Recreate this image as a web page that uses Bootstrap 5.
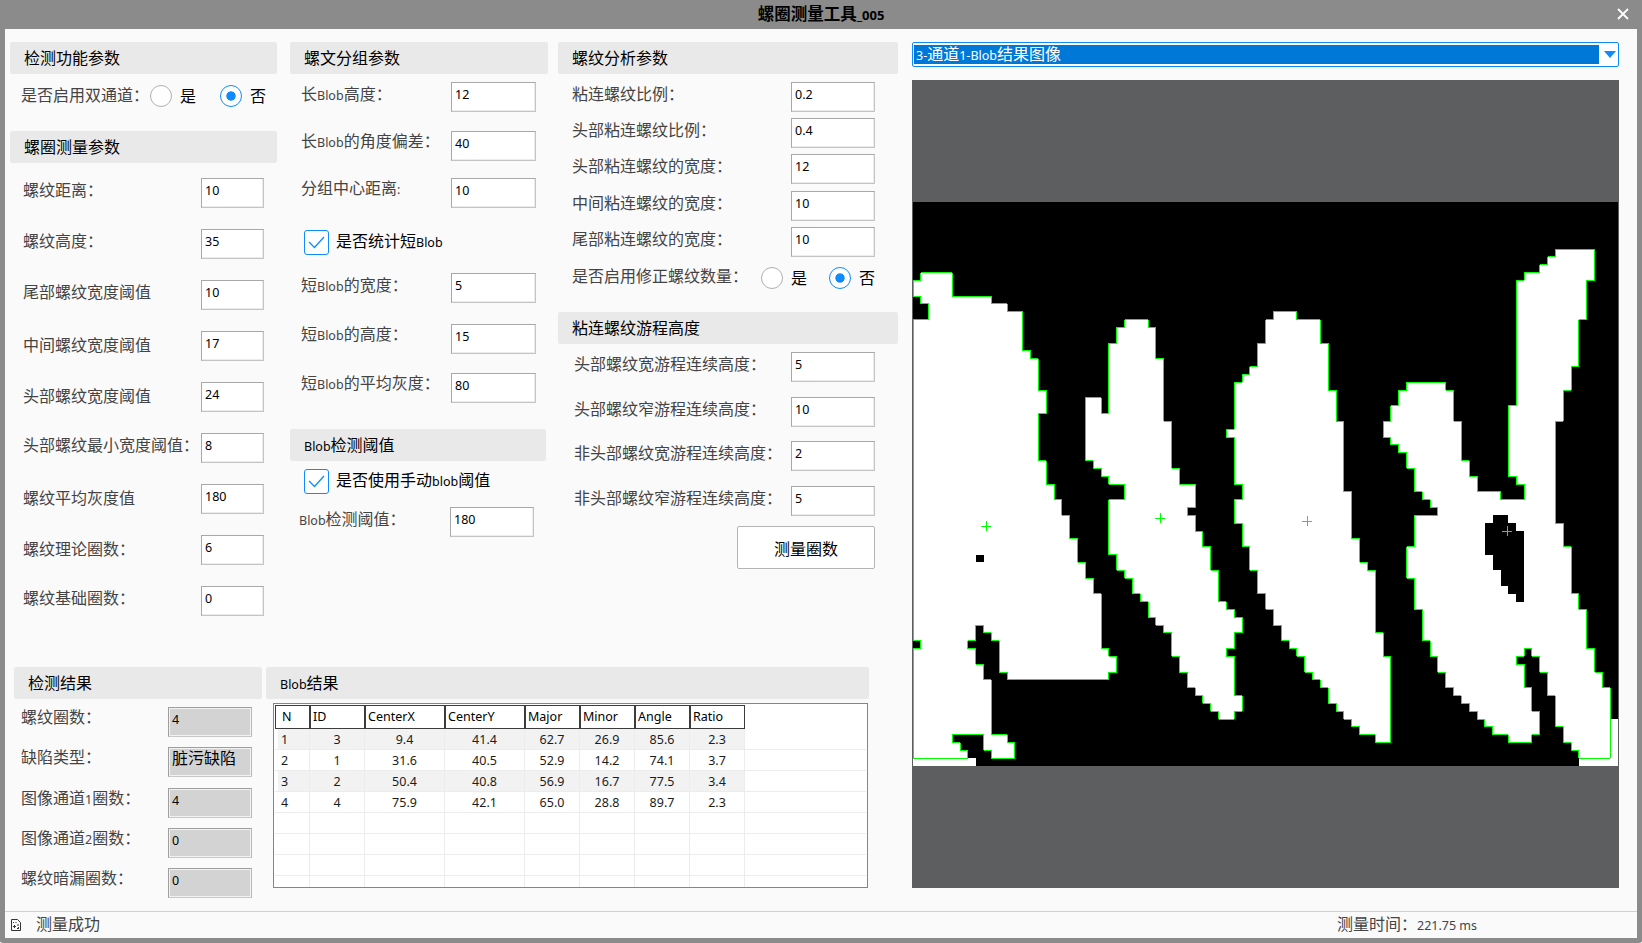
<!DOCTYPE html>
<html lang="zh-CN">
<head>
<meta charset="utf-8">
<meta name="viewport" content="width=device-width, initial-scale=1">
<title>螺圈测量工具_005</title>
<link href="https://cdn.jsdelivr.net/npm/bootstrap@5.3.0/dist/css/bootstrap.min.css" rel="stylesheet">
<style>
  :root { --edge: #8b8b8b; --accent: #0f8bff; --ui: "Noto Sans CJK SC", sans-serif; --latin: "Noto Sans", "Noto Sans CJK SC", sans-serif; }
  body { font-family: var(--ui); font-size: 16px; line-height: 25px; color: #444; background: #fff; overflow: hidden; }
  .tool-window { width: 1642px; height: 943px; background: #fafafa; border: 5px solid var(--edge); border-top: 0; border-radius: 3px; }
  .title-bar { height: 29px; margin: 0 -5px; background: var(--edge); color: #000; font-weight: 700; font-size: 16.5px; line-height: 26px; }
  .title-bar .lat { font-size: 13px; }
  .close-x { right: 13px; top: 8px; }
  .lat { font-family: var(--latin); font-size: 12.5px; line-height: 1; }
  .work-area { height: 883px; padding: 13px 0 0 5px; border-bottom: 1px solid #d0d0d0; }
  .param-zone { height: 625px; }
  .section-bar { height: 32px; padding-left: 14px; line-height: 30px; background: #e9e9e9; border-radius: 2px; color: #000; white-space: nowrap; }
  .pane-a { width: 267px; margin-right: 13px; }
  .pane-b { width: 258px; margin-right: 10px; }
  .pane-c { width: 340px; margin-right: 14px; }
  .bar-threshold { width: 256px; }
  .bar-result { width: 248px; }
  .bar-blob { width: 603px; }
  .bar-run { margin-top: 23px; }

  .fields { display: grid; align-items: start; white-space: nowrap; }
  .fields > label { line-height: 25px; margin-top: -1px; }
  .fields > .drop { margin-top: 1px; }
  .fields > .lift { margin-top: -3px; }
  .fields-a { grid-template-columns: 178px 63px; grid-auto-rows: 51px; padding-left: 13px; margin-top: 15px; }
  .fields-b { grid-template-columns: 150px 85px; padding-left: 11px; }
  .fields-c { grid-template-columns: 219px 84px; padding-left: 14px; }
  .rows-long { grid-template-rows: 49px 47px 52px; margin-top: 8px; }
  .rows-short { grid-template-rows: 51px 49px 56px; margin-top: 18px; }
  .rows-ratio { grid-template-rows: 36px 36px 37px 36px 36px; margin-top: 8px; }
  .rows-run { grid-template-rows: 45px 44px 45px 40px; margin-top: 8px; grid-template-columns: 217px 84px; padding-left: 16px; }
  .rows-manual { grid-template-columns: 151px 84px; padding-left: 9px; margin-top: 13px; }
  .rows-result { grid-template-columns: 147px 84px; grid-template-rows: 40px 41px 40px 40px 30px; margin-top: 8px; padding-left: 7px; }

  .box { height: 30px; padding: 0 0 0 3px; border-radius: 0; border: 1px solid #a8a8a8; border-right-color: #c4c4c4; border-bottom-color: #c4c4c4; box-shadow: inset -1px -1px 0 #ececec; background: #fff; color: #000; font: 12.5px/23px var(--latin); display: block; }
  .box-ro { background: #d3d3d3; border: 1px solid #9e9e9e; border-right-color: #b8b8b8; border-bottom-color: #c8c8c8; box-shadow: inset 1px 1px 0 #f2f2f2, inset -1px -1px 0 #f2f2f2; }
  .box-cjk { font: 16px/19px var(--ui); }

  .ring { appearance: none; width: 22px; height: 22px; margin: 0; border: 1px solid #b0b0b0; border-radius: 50%; background: #fff; flex: none; }
  .ring:checked { border-color: var(--accent); background: radial-gradient(circle, var(--accent) 4.3px, transparent 5px) #fff; }
  .tick { width: 25px; height: 25px; border: 1px solid var(--accent); border-radius: 3px; background: #fff; margin-right: 7px; }
  .check-row span { line-height: 23px; }
  .check-row > span { margin-top: -2px; }
  .opt { color: #000; margin: -2px 24px 0 8px; }
  .radio-a { height: 22px; margin-top: 11px; padding-left: 11px; white-space: nowrap; }
  .radio-a .cap { width: 129px; margin-top: -4px; }
  .radio-c { height: 22px; margin-top: 4px; padding-left: 14px; white-space: nowrap; }
  .radio-c .cap { width: 189px; margin-top: -6px; }
  .radio-c .opt { margin-right: 22px; }
  .check-row { height: 25px; padding-left: 14px; color: #000; white-space: nowrap; }

  .run-btn { width: 138px; height: 43px; margin: 0 23px 0 auto; border: 1px solid #b4b4b4; border-radius: 2px; background: #fff; color: #000; padding: 0; font-size: 16px; line-height: 38px; display: block; }

  .grid-frame { width: 595px; height: 185px; margin: 4px 0 0 7px; border: 1px solid #84848e; background: #fff; overflow: hidden; padding: 1px; }
  .blob-grid { table-layout: fixed; width: 591px; border-collapse: separate; border-spacing: 0; font: 12.5px/18px var(--latin); color: #1c1c1c; }
  .blob-grid th { height: 24px; padding: 0 0 0 2px; font-weight: 400; color: #000; border: 1px solid #3c3c3c; line-height: 20px; background: #fff; }
  .blob-grid th.void { border: 0; }
  .blob-grid th:first-child { padding-left: 6px; }
  .blob-grid td { height: 21px; padding: 2px 0 0; text-align: center; border-right: 1px solid #ececec; border-bottom: 1px solid #ececec; line-height: 18px; }
  .blob-grid td:first-child { text-align: left; padding-left: 6px; }
  .blob-grid td:last-child { border-right: 0; background: #fff; }
  .blob-grid tr.odd td { background: #f2f2f2; }
  .blob-grid tr.odd td:first-child { background: linear-gradient(90deg, #fff 3px, #f2f2f2 3px); }
  .blob-grid tr.odd td:last-child { background: #fff; }

  .picker { width: 707px; height: 25px; border: 1px solid var(--accent); border-radius: 2px; background: #fff; padding: 2px 2px 2px 1px; }
  .picked { width: 685px; height: 19px; background: #0078d7; color: #fff; line-height: 16px; padding-left: 2px; margin-right: 5px; white-space: nowrap; }
  .view { width: 707px; height: 808px; margin-top: 13px; background: #5d5e60; }
  .status-bar { height: 25px; padding-left: 6px; line-height: 23px; white-space: nowrap; }
  .status-bar > span { margin-top: -2px; }
  .status-msg { width: 1301px; margin-left: 15px; }
</style>
</head>
<body>
<div class="tool-window">
  <header class="title-bar text-center position-relative">螺圈测量工具<span class="lat">_005</span>
    <svg class="close-x position-absolute" width="12" height="12" viewBox="0 0 12 12"><path d="M1 1 11 11M11 1 1 11" stroke="#fff" stroke-width="1.8" fill="none"/></svg>
  </header>

  <main class="work-area d-flex">
    <div>
      <div class="param-zone d-flex">
        <section class="pane-a">
          <div class="section-bar">检测功能参数</div>
          <div class="radio-a d-flex align-items-center">
            <span class="cap">是否启用双通道：</span>
            <input class="ring" type="radio" name="dual"><span class="opt">是</span>
            <input class="ring" type="radio" name="dual" checked><span class="opt me-0">否</span>
          </div>
          <div class="section-bar mt-4">螺圈测量参数</div>
          <div class="fields fields-a">
            <label>螺纹距离：</label><output class="form-control box">10</output>
            <label>螺纹高度：</label><output class="form-control box">35</output>
            <label>尾部螺纹宽度阈值</label><output class="form-control box">10</output>
            <label class="drop">中间螺纹宽度阈值</label><output class="form-control box">17</output>
            <label class="drop">头部螺纹宽度阈值</label><output class="form-control box">24</output>
            <label>头部螺纹最小宽度阈值：</label><output class="form-control box">8</output>
            <label class="drop">螺纹平均灰度值</label><output class="form-control box">180</output>
            <label class="drop">螺纹理论圈数：</label><output class="form-control box">6</output>
            <label>螺纹基础圈数：</label><output class="form-control box">0</output>
          </div>
        </section>

        <section class="pane-b">
          <div class="section-bar">螺文分组参数</div>
          <div class="fields fields-b rows-long">
            <label>长<span class="lat">Blob</span>高度：</label><output class="form-control box">12</output>
            <label class="lift">长<span class="lat">Blob</span>的角度偏差：</label><output class="form-control box">40</output>
            <label class="lift">分组中心距离<span class="lat">:</span></label><output class="form-control box">10</output>
          </div>
          <div class="check-row d-flex align-items-center">
            <svg class="tick" viewBox="0 0 23 23"><path d="M4 11 9.5 16.5 19 6" fill="none" stroke="#0f8bff" stroke-width="1.3"/></svg>
            <span>是否统计短<span class="lat">Blob</span></span>
          </div>
          <div class="fields fields-b rows-short">
            <label>短<span class="lat">Blob</span>的宽度：</label><output class="form-control box">5</output>
            <label class="lift">短<span class="lat">Blob</span>的高度：</label><output class="form-control box">15</output>
            <label class="lift">短<span class="lat">Blob</span>的平均灰度：</label><output class="form-control box">80</output>
          </div>
          <div class="section-bar bar-threshold"><span class="lat">Blob</span>检测阈值</div>
          <div class="check-row d-flex align-items-center mt-2">
            <svg class="tick" viewBox="0 0 23 23"><path d="M4 11 9.5 16.5 19 6" fill="none" stroke="#0f8bff" stroke-width="1.3"/></svg>
            <span>是否使用手动<span class="lat">blob</span>阈值</span>
          </div>
          <div class="fields rows-manual">
            <label><span class="lat">Blob</span>检测阈值：</label><output class="form-control box">180</output>
          </div>
        </section>

        <section class="pane-c">
          <div class="section-bar">螺纹分析参数</div>
          <div class="fields fields-c rows-ratio">
            <label>粘连螺纹比例：</label><output class="form-control box">0.2</output>
            <label>头部粘连螺纹比例：</label><output class="form-control box">0.4</output>
            <label>头部粘连螺纹的宽度：</label><output class="form-control box">12</output>
            <label>中间粘连螺纹的宽度：</label><output class="form-control box">10</output>
            <label>尾部粘连螺纹的宽度：</label><output class="form-control box">10</output>
          </div>
          <div class="radio-c d-flex align-items-center">
            <span class="cap">是否启用修正螺纹数量：</span>
            <input class="ring" type="radio" name="fix"><span class="opt">是</span>
            <input class="ring" type="radio" name="fix" checked><span class="opt me-0">否</span>
          </div>
          <div class="section-bar bar-run">粘连螺纹游程高度</div>
          <div class="fields rows-run">
            <label>头部螺纹宽游程连续高度：</label><output class="form-control box">5</output>
            <label>头部螺纹窄游程连续高度：</label><output class="form-control box">10</output>
            <label>非头部螺纹宽游程连续高度：</label><output class="form-control box">2</output>
            <label>非头部螺纹窄游程连续高度：</label><output class="form-control box">5</output>
          </div>
          <button class="btn run-btn" type="button">测量圈数</button>
        </section>
      </div>

      <div class="d-flex ps-1">
        <section class="me-1">
          <div class="section-bar bar-result">检测结果</div>
          <div class="fields rows-result">
            <label class="lift">螺纹圈数：</label><output class="form-control box box-ro">4</output>
            <label class="lift">缺陷类型：</label><output class="form-control box box-ro box-cjk">脏污缺陷</output>
            <label class="lift">图像通道<span class="lat">1</span>圈数：</label><output class="form-control box box-ro">4</output>
            <label class="lift">图像通道<span class="lat">2</span>圈数：</label><output class="form-control box box-ro">0</output>
            <label class="lift">螺纹暗漏圈数：</label><output class="form-control box box-ro">0</output>
          </div>
        </section>
        <section>
          <div class="section-bar bar-blob"><span class="lat">Blob</span>结果</div>
          <div class="grid-frame">
            <table class="blob-grid">
              <colgroup><col style="width:35px"><col style="width:55px"><col style="width:80px"><col style="width:80px"><col style="width:55px"><col style="width:55px"><col style="width:55px"><col style="width:55px"><col></colgroup>
              <thead><tr><th>N</th><th>ID</th><th>CenterX</th><th>CenterY</th><th>Major</th><th>Minor</th><th>Angle</th><th>Ratio</th><th class="void"></th></tr></thead>
              <tbody>
                <tr class="odd"><td>1</td><td>3</td><td>9.4</td><td>41.4</td><td>62.7</td><td>26.9</td><td>85.6</td><td>2.3</td><td></td></tr>
                <tr><td>2</td><td>1</td><td>31.6</td><td>40.5</td><td>52.9</td><td>14.2</td><td>74.1</td><td>3.7</td><td></td></tr>
                <tr class="odd"><td>3</td><td>2</td><td>50.4</td><td>40.8</td><td>56.9</td><td>16.7</td><td>77.5</td><td>3.4</td><td></td></tr>
                <tr><td>4</td><td>4</td><td>75.9</td><td>42.1</td><td>65.0</td><td>28.8</td><td>89.7</td><td>2.3</td><td></td></tr>
                <tr><td></td><td></td><td></td><td></td><td></td><td></td><td></td><td></td><td></td></tr>
                <tr><td></td><td></td><td></td><td></td><td></td><td></td><td></td><td></td><td></td></tr>
                <tr><td></td><td></td><td></td><td></td><td></td><td></td><td></td><td></td><td></td></tr>
                <tr><td></td><td></td><td></td><td></td><td></td><td></td><td></td><td></td><td></td></tr>
              </tbody>
            </table>
          </div>
        </section>
      </div>
    </div>

    <aside>
      <div class="picker d-flex align-items-center">
        <div class="picked"><span class="lat">3-</span>通道<span class="lat">1-Blob</span>结果图像</div>
        <svg width="12" height="7" viewBox="0 0 12 7"><path d="M0 0H12L6 7Z" fill="#0f8bff"/></svg>
      </div>
      <div class="view">
        <!-- 90 x 72 cell image, 705 x 564 px on screen -->
        <svg class="d-block" width="707" height="808" viewBox="0 0 707 808" shape-rendering="crispEdges">
          <rect x="1" y="122" width="705" height="564" fill="#000"/>
          <svg x="1" y="122" width="705" height="564">
            <g transform="translate(.02 .02) scale(7.83333)">
              <g fill="#fff">
                <path d="M0 71H8V72H0ZM89 66H90V72H85V71H89Z"/>
                <g stroke="#00ff00" stroke-width="1">
                  <path vector-effect="non-scaling-stroke" d="M0 10H1V9H5V12H10V13H12V14H14V19H15V20H16V24H17V27H16V33H17V36H18V38H19V40H20V43H21V46H22V48H23V50H24V57H25V58H26V60H25V61H12V60H11V56H10V55H9V54H8V56H7V57H8V59H9V61H10V68H12V69H13V71H10V70H9V68H5V69H6V70H7V71H0V57H1V56H0V15H2V13H1V12H0Z"/>
                  <path vector-effect="non-scaling-stroke" d="M22 25H24V27H25V18H26V16H27V15H30V16H31V20H32V28H33V34H34V36H36V39H35V40H36V42H37V44H38V47H39V51H40V52H41V53H42V55H41V57H40V58H41V63H42V65H41V66H39V65H38V64H37V63H36V62H35V60H34V58H33V55H32V54H31V53H30V51H29V50H28V48H27V47H26V45H25V38H27V36H25V35H24V34H23V33H22Z"/>
                  <path vector-effect="non-scaling-stroke" d="M40 29H41V23H42V22H43V21H44V18H45V15H46V14H49V15H52V18H53V24H54V28H55V37H56V43H57V46H58V47H59V55H60V58H61V69H59V68H57V67H56V66H55V65H54V64H53V62H52V61H51V60H50V58H49V57H48V56H47V54H46V52H45V50H44V47H43V44H42V41H41V38H42V36H41V30H40Z"/>
                  <path vector-effect="non-scaling-stroke" d="M82 6H87V10H86V15H85V21H84V24H83V28H82V41H83V44H84V50H85V52H86V57H87V60H88V62H89V71H85V70H84V69H83V67H82V63H81V60H80V58H79V57H78V58H77V59H78V62H79V65H80V68H79V69H76V68H74V67H73V66H72V65H71V64H70V63H69V62H68V60H67V58H66V56H65V52H64V48H63V44H64V40H67V39H66V38H65V37H64V34H63V32H62V31H61V30H60V28H61V26H62V24H63V23H68V24H69V28H70V33H71V35H72V37H75V38H78V36H77V35H76V26H77V10H78V9H80V8H81V7H82Z"/>
                </g>
              </g>
              <path fill="#000" d="M8 45H9V46H8ZM74 40H76V41H77V42H78V51H77V50H76V49H75V47H74V45H73V41H74Z"/>
            </g>
          </svg>
          <g stroke="#00ff00" stroke-width="1">
            <path d="M69 446.5H79M74.500 441V451M243 438.500H253M248.500 433V443M390 441.500H400M395.500 436V446M590 451.500H600M595.500 446V456"/>
          </g>
        </svg>
      </div>
    </aside>
  </main>

  <footer class="status-bar d-flex align-items-center">
    <svg width="10" height="12" viewBox="0 0 10 12" fill="none" stroke="#333"><path d="M.5 .5H6.500L9.500 3.500V11.500H.5Z"/><path d="M2 3.500H3M4.500 3.500H5.500M6 6H8M7 8.500H8M2 7.500H5M3.500 6V9M6 9.500H8" stroke-width="1"/></svg>
    <span class="status-msg">测量成功</span>
    <span>测量时间：<span class="lat">221.75 ms</span></span>
  </footer>
</div>
<script src="https://cdn.jsdelivr.net/npm/bootstrap@5.3.0/dist/js/bootstrap.bundle.min.js"></script>
</body>
</html>
